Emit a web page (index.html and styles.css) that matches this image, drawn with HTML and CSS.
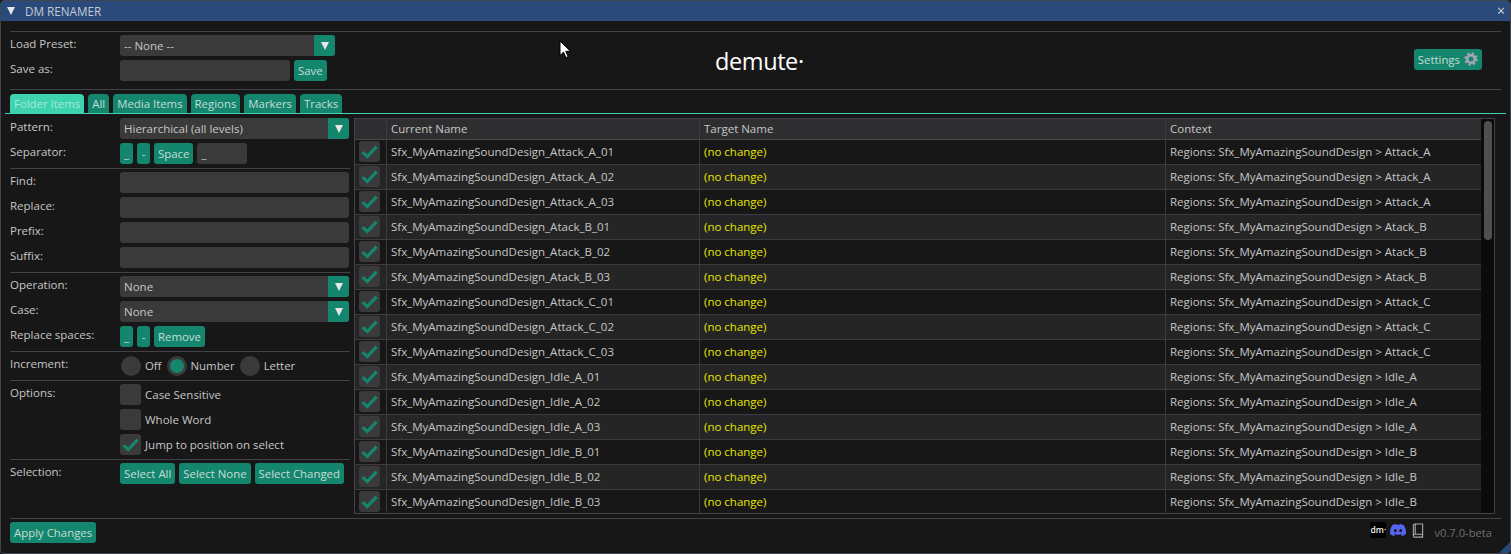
FILE: index.html
```html
<!DOCTYPE html>
<html lang="en">
<head>
<meta charset="utf-8">
<title>DM Renamer</title>
<link rel="stylesheet" href="styles.css">
</head>
<body>
<svg class="sprite" aria-hidden="true"><symbol id="chk" viewBox="0 0 21 21"><path d="M3.6 11.2 8.3 15.6 17.6 5.6" fill="none" stroke="#14866d" stroke-width="3.2"/></symbol></svg>
<div class="window">
  <div class="titlebar"><span class="collapse"></span><span class="title">DM RENAMER</span><span class="close">×</span></div>
  <div class="content">
    <div class="rule first"></div>
    <div class="top">
      <div class="top-left">
        <div class="row"><span class="label">Load Preset:</span><div class="combo preset"><span class="combo-text">-- None --</span><span class="arrow"></span></div></div>
        <div class="row"><span class="label">Save as:</span><div class="controls"><div class="field save-field"></div><button class="btn">Save</button></div></div>
      </div>
      <div class="logo">demute·</div>
      <button class="btn settings">Settings
        <svg class="gear" viewBox="0 0 14 14"><circle cx="7" cy="7" r="3.8" fill="none" stroke="#a9a4b2" stroke-width="2.6"/><circle cx="7" cy="7" r="5.6" fill="none" stroke="#a9a4b2" stroke-width="2.2" stroke-dasharray="2.2 2.2"/></svg>
      </button>
    </div>
    <div class="rule"></div>
    <div class="tabs">
      <span class="tab active">Folder Items</span><span class="tab">All</span><span class="tab">Media Items</span><span class="tab">Regions</span><span class="tab">Markers</span><span class="tab">Tracks</span>
    </div>
    <div class="main">
      <div class="panel">
        <div class="row"><span class="label">Pattern:</span><div class="combo"><span class="combo-text">Hierarchical (all levels)</span><span class="arrow"></span></div></div>
        <div class="row"><span class="label">Separator:</span><div class="controls"><button class="btn">_</button><button class="btn">-</button><button class="btn">Space</button><div class="field sep-field">_</div></div></div>
        <div class="rule sec"></div>
        <div class="row"><span class="label">Find:</span><div class="field"></div></div>
        <div class="row"><span class="label">Replace:</span><div class="field"></div></div>
        <div class="row"><span class="label">Prefix:</span><div class="field"></div></div>
        <div class="row"><span class="label">Suffix:</span><div class="field"></div></div>
        <div class="rule sec"></div>
        <div class="row"><span class="label">Operation:</span><div class="combo"><span class="combo-text">None</span><span class="arrow"></span></div></div>
        <div class="row"><span class="label">Case:</span><div class="combo"><span class="combo-text">None</span><span class="arrow"></span></div></div>
        <div class="row"><span class="label">Replace spaces:</span><div class="controls"><button class="btn">_</button><button class="btn">-</button><button class="btn">Remove</button></div></div>
        <div class="rule sec"></div>
        <div class="row"><span class="label">Increment:</span><div class="radios">
          <span class="radio-item"><span class="radio"></span>Off</span>
          <span class="radio-item"><span class="radio on"></span>Number</span>
          <span class="radio-item"><span class="radio"></span>Letter</span>
        </div></div>
        <div class="rule sec"></div>
        <div class="row"><span class="label">Options:</span><span class="check-item"><span class="check"></span>Case Sensitive</span></div>
        <div class="row"><span class="label"></span><span class="check-item"><span class="check"></span>Whole Word</span></div>
        <div class="row"><span class="label"></span><span class="check-item"><span class="check"><svg class="tick"><use href="#chk"/></svg></span>Jump to position on select</span></div>
        <div class="rule sec"></div>
        <div class="row"><span class="label">Selection:</span><div class="controls"><button class="btn">Select All</button><button class="btn">Select None</button><button class="btn">Select Changed</button></div></div>
      </div>
      <div class="table-wrap">
        <table class="items">
          <colgroup><col class="c1"><col class="c2"><col class="c3"><col class="c4"></colgroup>
          <thead><tr><th></th><th>Current Name</th><th>Target Name</th><th>Context</th></tr></thead>
          <tbody>
            <tr><td><span class="check"><svg class="tick"><use href="#chk"/></svg></span></td><td>Sfx_MyAmazingSoundDesign_Attack_A_01</td><td class="same">(no change)</td><td>Regions: Sfx_MyAmazingSoundDesign &gt; Attack_A</td></tr>
            <tr><td><span class="check"><svg class="tick"><use href="#chk"/></svg></span></td><td>Sfx_MyAmazingSoundDesign_Attack_A_02</td><td class="same">(no change)</td><td>Regions: Sfx_MyAmazingSoundDesign &gt; Attack_A</td></tr>
            <tr><td><span class="check"><svg class="tick"><use href="#chk"/></svg></span></td><td>Sfx_MyAmazingSoundDesign_Attack_A_03</td><td class="same">(no change)</td><td>Regions: Sfx_MyAmazingSoundDesign &gt; Attack_A</td></tr>
            <tr><td><span class="check"><svg class="tick"><use href="#chk"/></svg></span></td><td>Sfx_MyAmazingSoundDesign_Atack_B_01</td><td class="same">(no change)</td><td>Regions: Sfx_MyAmazingSoundDesign &gt; Atack_B</td></tr>
            <tr><td><span class="check"><svg class="tick"><use href="#chk"/></svg></span></td><td>Sfx_MyAmazingSoundDesign_Atack_B_02</td><td class="same">(no change)</td><td>Regions: Sfx_MyAmazingSoundDesign &gt; Atack_B</td></tr>
            <tr><td><span class="check"><svg class="tick"><use href="#chk"/></svg></span></td><td>Sfx_MyAmazingSoundDesign_Atack_B_03</td><td class="same">(no change)</td><td>Regions: Sfx_MyAmazingSoundDesign &gt; Atack_B</td></tr>
            <tr><td><span class="check"><svg class="tick"><use href="#chk"/></svg></span></td><td>Sfx_MyAmazingSoundDesign_Attack_C_01</td><td class="same">(no change)</td><td>Regions: Sfx_MyAmazingSoundDesign &gt; Attack_C</td></tr>
            <tr><td><span class="check"><svg class="tick"><use href="#chk"/></svg></span></td><td>Sfx_MyAmazingSoundDesign_Attack_C_02</td><td class="same">(no change)</td><td>Regions: Sfx_MyAmazingSoundDesign &gt; Attack_C</td></tr>
            <tr><td><span class="check"><svg class="tick"><use href="#chk"/></svg></span></td><td>Sfx_MyAmazingSoundDesign_Attack_C_03</td><td class="same">(no change)</td><td>Regions: Sfx_MyAmazingSoundDesign &gt; Attack_C</td></tr>
            <tr><td><span class="check"><svg class="tick"><use href="#chk"/></svg></span></td><td>Sfx_MyAmazingSoundDesign_Idle_A_01</td><td class="same">(no change)</td><td>Regions: Sfx_MyAmazingSoundDesign &gt; Idle_A</td></tr>
            <tr><td><span class="check"><svg class="tick"><use href="#chk"/></svg></span></td><td>Sfx_MyAmazingSoundDesign_Idle_A_02</td><td class="same">(no change)</td><td>Regions: Sfx_MyAmazingSoundDesign &gt; Idle_A</td></tr>
            <tr><td><span class="check"><svg class="tick"><use href="#chk"/></svg></span></td><td>Sfx_MyAmazingSoundDesign_Idle_A_03</td><td class="same">(no change)</td><td>Regions: Sfx_MyAmazingSoundDesign &gt; Idle_A</td></tr>
            <tr><td><span class="check"><svg class="tick"><use href="#chk"/></svg></span></td><td>Sfx_MyAmazingSoundDesign_Idle_B_01</td><td class="same">(no change)</td><td>Regions: Sfx_MyAmazingSoundDesign &gt; Idle_B</td></tr>
            <tr><td><span class="check"><svg class="tick"><use href="#chk"/></svg></span></td><td>Sfx_MyAmazingSoundDesign_Idle_B_02</td><td class="same">(no change)</td><td>Regions: Sfx_MyAmazingSoundDesign &gt; Idle_B</td></tr>
            <tr><td><span class="check"><svg class="tick"><use href="#chk"/></svg></span></td><td>Sfx_MyAmazingSoundDesign_Idle_B_03</td><td class="same">(no change)</td><td>Regions: Sfx_MyAmazingSoundDesign &gt; Idle_B</td></tr>
          </tbody>
        </table>
        <div class="scrollbar"><div class="thumb"></div></div>
      </div>
    </div>
    <div class="rule bottom"></div>
    <div class="footer">
      <button class="btn">Apply Changes</button>
      <div class="footer-right">
        <span class="dm-badge">dm·</span>
        <svg class="discord" viewBox="0 0 24 24"><path fill="#5865f2" d="M20.317 4.37a19.791 19.791 0 0 0-4.885-1.515.074.074 0 0 0-.079.037c-.21.375-.444.864-.608 1.25a18.27 18.27 0 0 0-5.487 0 12.64 12.64 0 0 0-.617-1.25.077.077 0 0 0-.079-.037A19.736 19.736 0 0 0 3.677 4.37a.07.07 0 0 0-.032.027C.533 9.046-.32 13.58.099 18.057a.082.082 0 0 0 .031.057 19.9 19.9 0 0 0 5.993 3.03.078.078 0 0 0 .084-.028 14.09 14.09 0 0 0 1.226-1.994.076.076 0 0 0-.041-.106 13.107 13.107 0 0 1-1.872-.892.077.077 0 0 1-.008-.128 10.2 10.2 0 0 0 .372-.292.074.074 0 0 1 .077-.01c3.928 1.793 8.18 1.793 12.062 0a.074.074 0 0 1 .078.01c.12.098.246.198.373.292a.077.077 0 0 1-.006.127 12.299 12.299 0 0 1-1.873.892.077.077 0 0 0-.041.107c.36.698.772 1.362 1.225 1.993a.076.076 0 0 0 .084.028 19.839 19.839 0 0 0 6.002-3.03.077.077 0 0 0 .032-.054c.5-5.177-.838-9.674-3.549-13.66a.061.061 0 0 0-.031-.03zM8.02 15.33c-1.183 0-2.157-1.085-2.157-2.419 0-1.333.956-2.419 2.157-2.419 1.21 0 2.176 1.096 2.157 2.42 0 1.333-.956 2.418-2.157 2.418zm7.975 0c-1.183 0-2.157-1.085-2.157-2.419 0-1.333.955-2.419 2.157-2.419 1.21 0 2.176 1.096 2.157 2.42 0 1.333-.946 2.418-2.157 2.418z"/></svg>
        <svg class="book" viewBox="0 0 13 16"><path d="M2.5 1h9v11h-8a2 2 0 0 0-2 2v-11a2 2 0 0 1 1-2zM1.5 14a1.6 1.6 0 0 0 2 1.2h8V12M3.5 1v11" fill="none" stroke="#a8a8a8" stroke-width="1.2"/></svg>
        <span class="version">v0.7.0-beta</span>
      </div>
    </div>
  </div>
  <span class="grip"></span>
  <svg class="cursor" viewBox="0 0 12 19"><path d="M1 1v14.5l3.5-3.3 2.4 5.4 2.3-1-2.4-5.3H11.5z" fill="#fff" stroke="#000" stroke-width="1"/></svg>
</div>
</body>
</html>
```

FILE: styles.css
```css
* { box-sizing: border-box; }
html, body { margin: 0; padding: 0; background: #171717; }
body { font-family: "Open Sans", sans-serif; font-size: 11.5px; color: #c6c6c6; overflow: hidden; }
.sprite { position: absolute; width: 0; height: 0; }

.window { position: relative; width: 1511px; height: 554px; border: 1px solid #42454e; border-radius: 4px; background: #171717; display: flex; flex-direction: column; overflow: hidden; }

.titlebar { flex: none; height: 20px; background: #294a7a; display: flex; align-items: center; padding-left: 6px; padding-right: 5px; color: #c6cbd4; font-size: 11.7px; }
.collapse { width: 0; height: 0; border-left: 4.5px solid transparent; border-right: 4.5px solid transparent; border-top: 8px solid #e6e6e6; margin-right: 10px; }
.title { flex: 1; }
.close { font-size: 14px; line-height: 14px; color: #d5d8de; }

.content { flex: 1; padding: 0 9px; display: flex; flex-direction: column; }
.rule { height: 1px; background: #424248; flex: none; }
.rule.first { margin-top: 10px; }
.rule.sec { margin: 4px 0 3px; }
.rule.bottom { margin-top: 4px; }

.top { display: flex; align-items: center; height: 57px; padding: 3px 0 8px; }
.top-left { width: 325px; display: flex; flex-direction: column; gap: 4px; }
.logo { margin-left: 380px; font-family: "Open Sans", sans-serif; font-size: 23.5px; line-height: 24px; color: #fff; letter-spacing: -0.4px; margin-top: 6px; }
.settings { margin-left: auto; margin-right: 19px; height: 22px; margin-top: 2px; display: flex; align-items: center; gap: 4px; padding: 0 4px; }
.gear { width: 14px; height: 14px; }

.row { display: grid; grid-template-columns: 110px minmax(0, 1fr); min-height: 21px; }
.row + .row { margin-top: 4px; }
.top-left .row + .row { margin-top: 0; }
.label { line-height: 18px; white-space: nowrap; }
.controls { display: flex; gap: 4px; }

.field { height: 21px; background: #3a3a3a; border-radius: 3px; }
.save-field { width: 170px; }
.sep-field { width: 50px; padding-left: 4px; line-height: 22px; }

.combo { height: 21px; background: #3a3a3a; border-radius: 3px; display: flex; overflow: hidden; }
.combo-text { flex: 1; padding-left: 4px; line-height: 22px; }
.arrow { flex: none; width: 21px; background: #14866d; display: flex; align-items: center; justify-content: center; }
.arrow::before { content: ""; border-left: 4.5px solid transparent; border-right: 4.5px solid transparent; border-top: 8px solid #e6e6e6; }

.btn { height: 21px; min-width: 13px; background: #14866d; color: #c6dcd6; border: 0; border-radius: 3px; padding: 0 4px; font-family: inherit; font-size: 11.4px; line-height: 21px; white-space: nowrap; }

.tabs { display: flex; gap: 4px; margin: 4px -5px 4px; padding: 0 5px; border-bottom: 1px solid #3fd3b0; height: 20px; flex: none; }
.tab { height: 19px; background: #14866d; color: #c6dcd6; border-radius: 4px 4px 0 0; padding: 0 4px; line-height: 20px; white-space: nowrap; font-size: 11.4px; }
.tab.active { background: #3dd3af; color: #a9e8d9; }

.main { display: flex; height: 396px; flex: none; gap: 4px; }
.panel { width: 340px; flex: none; padding-right: 1px; }
.panel .rule { margin-right: -1px; }

.radios { display: flex; gap: 5px; align-items: center; height: 21px; padding-left: 1px; font-size: 11.4px; }
.radio-item { display: flex; align-items: center; gap: 4px; }
.radio { width: 20px; height: 20px; border-radius: 50%; background: #3a3a3a; display: flex; align-items: center; justify-content: center; }
.radio.on::before { content: ""; width: 14px; height: 14px; border-radius: 50%; background: #14866d; }

.check-item { display: flex; align-items: center; gap: 4px; height: 21px; }
.check { display: block; width: 21px; height: 21px; background: #3a3a3a; border-radius: 3px; flex: none; }
.tick { display: block; width: 21px; height: 21px; }

.table-wrap { position: relative; width: 1141px; height: 396px; border: 1px solid #424248; overflow: hidden; display: flex; background: #171717; }
.items { border-collapse: separate; border-spacing: 0; table-layout: fixed; width: 1126px; flex: none; align-self: flex-start; }
.c1 { width: 32px; } .c2 { width: 313px; } .c3 { width: 466px; } .c4 { width: 315px; }
.items th { height: 21px; background: #2e2e30; font-weight: 400; text-align: left; padding: 0 4px; border-right: 1px solid #3c3c40; border-bottom: 1px solid #48484e; line-height: 20px; }
.items th:last-child, .items td:last-child { border-right: 0; }
.items td { height: 25px; padding: 0 4px; border-right: 1px solid #3c3c40; border-bottom: 1px solid #3c3c40; line-height: 24px; white-space: nowrap; overflow: hidden; }
.items td:first-child { vertical-align: top; padding-top: 1px; }
.items tbody tr:nth-child(odd) td { background: #171717; }
.items tbody tr:nth-child(even) td { background: #252525; }
.items .same { color: #e6e600; }
.scrollbar { flex: 1; background: #0b0b0b; padding: 2px 2px 0 3px; }
.thumb { height: 119px; background: #4f4f4f; border-radius: 4px; }

.footer { display: flex; align-items: flex-start; justify-content: space-between; padding-top: 3px; }
.footer-right { display: flex; align-items: flex-start; margin-right: 9px; }
.dm-badge { width: 16px; height: 16px; background: #000; color: #f0f0f0; border-radius: 2px; font-size: 8.5px; line-height: 15px; text-align: center; font-weight: 600; overflow: hidden; white-space: nowrap; }
.discord { width: 16px; height: 16px; margin-left: 4px; }
.book { width: 12px; height: 15px; margin-left: 6px; margin-top: 1px; }
.version { color: #6f6f6f; margin-left: 10px; font-size: 11.2px; line-height: 21px; }

.grip { position: absolute; right: 0; bottom: 0; width: 11px; height: 11px; background: #264a78; clip-path: polygon(100% 0, 100% 100%, 0 100%); }
.cursor { position: absolute; left: 558px; top: 39px; width: 12px; height: 19px; }
```
